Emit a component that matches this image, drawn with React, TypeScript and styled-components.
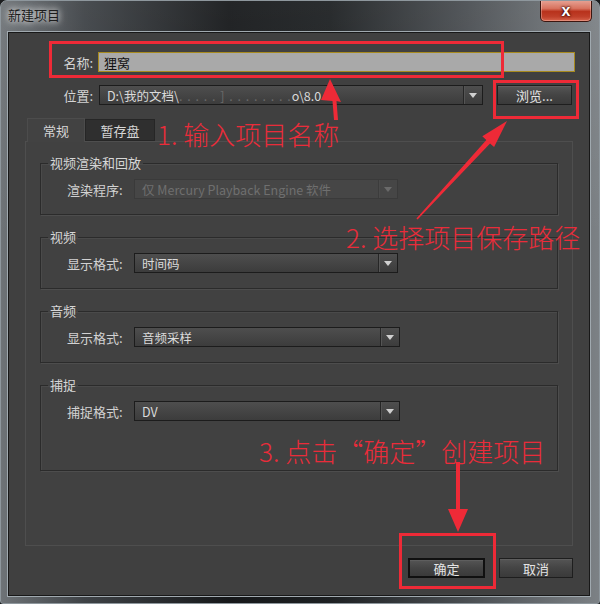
import React from "react";
import styled, { createGlobalStyle, css } from "styled-components";

const GlobalStyle = createGlobalStyle`
  html, body { margin: 0; padding: 0; background: #1b1d1f; }
  body { font-family: "Noto Sans CJK SC", "Liberation Sans", sans-serif; }
  * { box-sizing: border-box; }
`;

const UI_FONT = `"Liberation Sans", "Noto Sans CJK SC", sans-serif`;

const Window = styled.div`
  position: relative;
  width: 600px;
  height: 604px;
  border: 1px solid #8e979d;
  border-radius: 7px 7px 3px 3px;
  padding: 0 8px 6px 6px;
  display: flex;
  flex-direction: column;
  background:
    linear-gradient(180deg, rgba(255,255,255,0.06) 0%, rgba(0,0,0,0) 40%),
    linear-gradient(90deg, #6e7377 0%, #3e4246 14%, #16181a 38%, #1d2022 55%, #4a4e52 78%, #7c8185 100%);
  overflow: hidden;
`;

const TitleBar = styled.div`
  height: 30px;
  display: flex;
  justify-content: space-between;
  align-items: flex-start;
`;

const Title = styled.div`
  padding: 6px 0 0 1px;
  font-family: "Noto Sans CJK SC", sans-serif;
  font-size: 13px;
  line-height: 16px;
  color: #1c1c1c;
  text-shadow: 0 0 6px rgba(255,255,255,0.9), 0 0 10px rgba(255,255,255,0.7);
`;

const CloseButton = styled.div`
  width: 52px;
  height: 22px;
  margin: -1px -1px 0 0;
  border: 1px solid #3b1610;
  border-top: none;
  border-radius: 0 0 5px 5px;
  display: flex;
  align-items: center;
  justify-content: center;
  background: linear-gradient(180deg, #e7a597 0%, #d8735f 40%, #b8321c 55%, #c0402a 80%, #d8644c 100%);
  box-shadow: inset 0 0 0 1px rgba(255,220,210,0.35);
  color: #fff;
  font-family: "Liberation Sans", sans-serif;
  font-weight: bold;
  font-size: 16px;
  line-height: 1;
  text-shadow: 0 0 2px #300, 0 0 3px #300;
`;

const Client = styled.div`
  flex: 1;
  border: 1px solid #a0a9af;
  box-shadow: inset 0 0 0 1px #181818;
  background: #404040;
  display: flex;
  flex-direction: column;
  padding-top: 20px;
  font-family: ${UI_FONT};
  color: #d2d2d2;
  font-size: 13px;
`;

const TopRow = styled.div`
  display: flex;
  align-items: center;
  height: 20px;
  margin-bottom: 13px;
  padding-right: 15px;
`;

const TopLabel = styled.div`
  width: 85px;
  text-align: right;
  margin-right: 5px;
  font-family: "Noto Sans CJK SC", sans-serif;
  font-size: 13px;
  color: #d4d4d4;
`;

const NameInput = styled.div`
  flex: 1;
  height: 20px;
  background: #a9a9a9;
  border: 1px solid #a78a1e;
  padding: 0 5px;
  display: flex;
  align-items: center;
  color: #111;
  font-family: "Noto Sans CJK SC", sans-serif;
  font-size: 13px;
`;

const Select = styled.div<{ $width: number; $disabled?: boolean }>`
  width: ${(p) => p.$width}px;
  height: 20px;
  display: flex;
  align-items: stretch;
  border: 1px solid #1c1c1c;
  background: linear-gradient(180deg, #4e4e4e 0%, #3c3c3c 100%);
  color: #dadada;
  ${(p) =>
    p.$disabled &&
    css`
      border-color: #3a3a3a;
      background: #464646;
      color: #6f6f6f;
    `}
`;

const SelectText = styled.div`
  flex: 1;
  display: flex;
  align-items: center;
  padding-left: 7px;
  font-family: "Noto Sans CJK SC", sans-serif;
  font-size: 12.5px;
  white-space: nowrap;
  overflow: hidden;
`;

const Faint = styled.span`
  color: #6a6a6a;
  letter-spacing: 1px;
`;

const SelectArrow = styled.div<{ $disabled?: boolean }>`
  width: 19px;
  border-left: 1px solid ${(p) => (p.$disabled ? "#3c3c3c" : "#262626")};
  box-shadow: inset 1px 0 0 ${(p) => (p.$disabled ? "#4a4a4a" : "#555")};
  display: flex;
  align-items: center;
  justify-content: center;
  &::after {
    content: "";
    border-left: 4px solid transparent;
    border-right: 4px solid transparent;
    border-top: 5px solid ${(p) => (p.$disabled ? "#6a6a6a" : "#d0d0d0")};
  }
`;

const Button = styled.div<{ $width: number; $primary?: boolean }>`
  width: ${(p) => p.$width}px;
  height: 20px;
  display: flex;
  align-items: center;
  justify-content: center;
  border: 1px solid #1e1e1e;
  background: linear-gradient(180deg, #555 0%, #444 50%, #3a3a3a 100%);
  box-shadow: inset 0 1px 0 #5e5e5e;
  color: #e4e4e4;
  font-family: "Noto Sans CJK SC", sans-serif;
  font-size: 13px;
  ${(p) =>
    p.$primary &&
    css`
      border: 2px solid #101010;
    `}
`;

const Spacer = styled.div<{ $w: number }>`
  width: ${(p) => p.$w}px;
  flex: none;
`;

const Tabs = styled.div`
  display: flex;
  margin-left: 19px;
  height: 23px;
  align-items: flex-end;
`;

const Tab = styled.div<{ $active?: boolean }>`
  display: flex;
  align-items: center;
  justify-content: center;
  font-family: "Noto Sans CJK SC", sans-serif;
  font-size: 13px;
  color: #d6d6d6;
  ${(p) =>
    p.$active
      ? css`
          width: 58px;
          height: 24px;
          background: #424242;
          border: 1px solid #4c4c4c;
          border-bottom: none;
          margin-bottom: -1px;
          position: relative;
          z-index: 1;
        `
      : css`
          width: 70px;
          height: 22px;
          background: #2f2f2f;
          border: 1px solid #262626;
        `}
`;

const Panel = styled.div`
  margin: 0 17px;
  height: 405px;
  border: 1px solid #4e4e4e;
  background: #414141;
  padding: 13px 14px 0 14px;
  display: flex;
  flex-direction: column;
  gap: 14px;
`;

const Group = styled.fieldset<{ $tall?: boolean }>`
  margin: 0;
  border: 1px solid #2b2b2b;
  box-shadow: 1px 1px 0 #4d4d4d, inset 1px 1px 0 #4a4a4a;
  padding: 8px 0 ${(p) => (p.$tall ? 49 : 15)}px 0;
  min-width: 0;
`;

const Legend = styled.legend`
  margin-left: 7px;
  padding: 0 2px;
  font-family: "Noto Sans CJK SC", sans-serif;
  font-size: 13px;
  line-height: 16px;
  color: #d6d6d6;
`;

const FieldRow = styled.div`
  display: flex;
  align-items: center;
  padding-left: 26px;
`;

const FieldLabel = styled.div`
  width: 62px;
  margin-right: 5px;
  font-family: "Noto Sans CJK SC", sans-serif;
  font-size: 13px;
  color: #d2d2d2;
  white-space: nowrap;
`;

const Footer = styled.div`
  display: flex;
  justify-content: flex-end;
  padding: 12px 17px 0 0;
`;

/* ---------- annotation overlay ---------- */

const Overlay = styled.div`
  position: absolute;
  inset: 0;
  pointer-events: none;
`;

const RedBox = styled.div<{ $x: number; $y: number; $w: number; $h: number }>`
  position: absolute;
  left: ${(p) => p.$x}px;
  top: ${(p) => p.$y}px;
  width: ${(p) => p.$w}px;
  height: ${(p) => p.$h}px;
  border: 3px solid #ee2a37;
`;

const Note = styled.div<{ $x: number; $y: number }>`
  position: absolute;
  left: ${(p) => p.$x}px;
  top: ${(p) => p.$y}px;
  font-family: "Noto Sans CJK SC", sans-serif;
  font-weight: 300;
  font-size: 26px;
  line-height: 30px;
  color: #ea2c3a;
  white-space: nowrap;
`;

const Arrows = styled.svg`
  position: absolute;
  left: 0;
  top: 0;
`;

export default function App() {
  return (
    <>
      <GlobalStyle />
      <Window>
        <TitleBar>
          <Title>新建项目</Title>
          <CloseButton>x</CloseButton>
        </TitleBar>
        <Client>
          <TopRow>
            <TopLabel>名称:</TopLabel>
            <NameInput>狸窝</NameInput>
          </TopRow>
          <TopRow>
            <TopLabel>位置:</TopLabel>
            <Spacer $w={1} />
            <Select $width={384}>
              <SelectText>
                D:\我的文档\<Faint>. . . . . ] . . . . . . . .</Faint>o\8.0
              </SelectText>
              <SelectArrow />
            </Select>
            <Spacer $w={14} />
            <Button $width={75}>浏览...</Button>
          </TopRow>
          <Tabs>
            <Tab $active>常规</Tab>
            <Tab>暂存盘</Tab>
          </Tabs>
          <Panel>
            <Group>
              <Legend>视频渲染和回放</Legend>
              <FieldRow>
                <FieldLabel>渲染程序:</FieldLabel>
                <Select $width={264} $disabled>
                  <SelectText>仅 Mercury Playback Engine 软件</SelectText>
                  <SelectArrow $disabled />
                </Select>
              </FieldRow>
            </Group>
            <Group>
              <Legend>视频</Legend>
              <FieldRow>
                <FieldLabel>显示格式:</FieldLabel>
                <Select $width={264}>
                  <SelectText>时间码</SelectText>
                  <SelectArrow />
                </Select>
              </FieldRow>
            </Group>
            <Group>
              <Legend>音频</Legend>
              <FieldRow>
                <FieldLabel>显示格式:</FieldLabel>
                <Select $width={266}>
                  <SelectText>音频采样</SelectText>
                  <SelectArrow />
                </Select>
              </FieldRow>
            </Group>
            <Group $tall>
              <Legend>捕捉</Legend>
              <FieldRow>
                <FieldLabel>捕捉格式:</FieldLabel>
                <Select $width={266}>
                  <SelectText>DV</SelectText>
                  <SelectArrow />
                </Select>
              </FieldRow>
            </Group>
          </Panel>
          <Footer>
            <Button $width={77} $primary>
              确定
            </Button>
            <Spacer $w={14} />
            <Button $width={74}>取消</Button>
          </Footer>
        </Client>

        <Overlay>
          <RedBox $x={48} $y={40} $w={455} $h={37} />
          <RedBox $x={492} $y={79} $w={86} $h={39} />
          <RedBox $x={398} $y={532} $w={97} $h={56} />
          <Note $x={156} $y={118}>1. 输入项目名称</Note>
          <Note $x={345} $y={221}>2. 选择项目保存路径</Note>
          <Note $x={258} $y={435}>3. 点击“确定”创建项目</Note>
          <Arrows width="600" height="604" viewBox="0 0 600 604">
            <polygon
              fill="#ee2a37"
              points="329,78 340,101 335.5,100 337,119 333,119 331.5,100 320,99"
            />
            <polygon
              fill="#ee2a37"
              points="506,120 493.1,146.1 489.05,142.4 416.6,218.5 415.4,217.5 485.35,139 481.3,135.3"
            />
            <polygon
              fill="#ee2a37"
              points="455,461 459,461 459,508 467,508 457,531 447,508 455,508"
            />
          </Arrows>
        </Overlay>
      </Window>
    </>
  );
}
